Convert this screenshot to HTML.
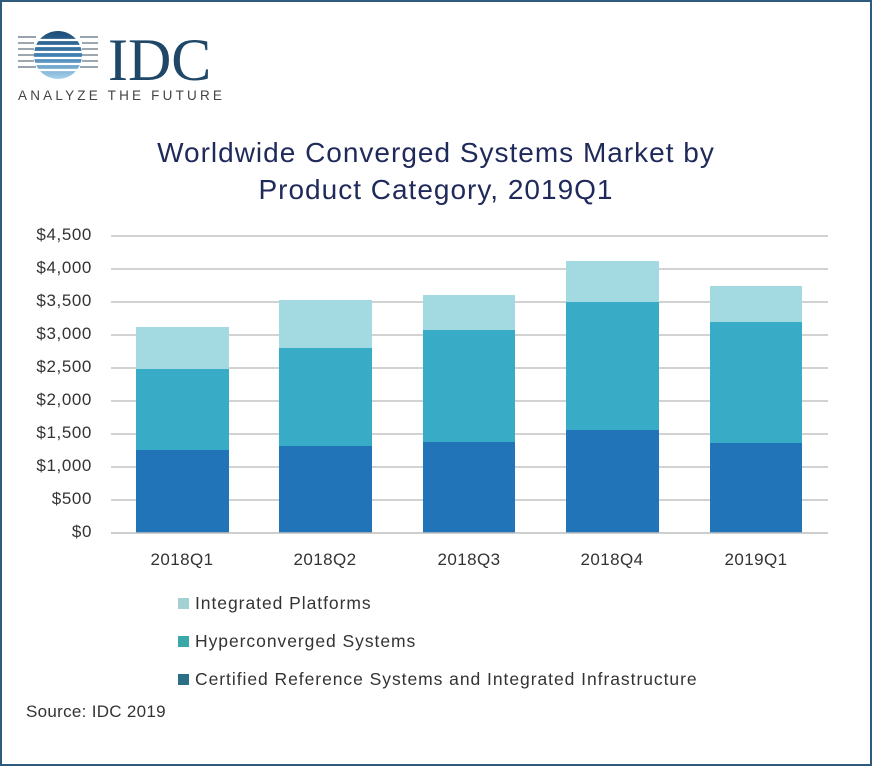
<!DOCTYPE html>
<html><head><style>
body{margin:0;width:872px;height:766px;background:#fff;font-family:"Liberation Sans",sans-serif;overflow:hidden}
.frame{position:absolute;left:0;top:0;width:868px;height:762px;border:2px solid #2e5a7c;background:#fff}
.t{position:absolute;color:#333;font-size:17px;white-space:nowrap}
.yl{position:absolute;left:6px;width:86px;text-align:right;font-size:17px;color:#333;letter-spacing:0.6px}
.xl{position:absolute;width:100px;text-align:center;top:550px;font-size:17px;color:#333;letter-spacing:0.4px}
.lg{letter-spacing:0.95px;font-size:17.5px}
</style></head><body>
<div class="frame"></div>
<svg style="position:absolute;left:0;top:0" width="872" height="766">
 <defs>
  <linearGradient id="g" x1="0" y1="0" x2="0" y2="1">
   <stop offset="0" stop-color="#1d4b76"/><stop offset="0.5" stop-color="#3f7fb0"/><stop offset="1" stop-color="#a8d3ec"/>
  </linearGradient>
 </defs>
 <circle cx="58" cy="55" r="24" fill="url(#g)"/>
 <g stroke="#fff" stroke-width="2.2">
  <line x1="30" y1="40" x2="90" y2="40"/><line x1="30" y1="46" x2="90" y2="46"/>
  <line x1="30" y1="52" x2="90" y2="52"/><line x1="30" y1="58" x2="90" y2="58"/>
  <line x1="30" y1="64" x2="90" y2="64"/><line x1="30" y1="70" x2="90" y2="70"/>
 </g>
 <g stroke="#5a6c7c" stroke-width="1.2">
  <line x1="18" y1="37" x2="36" y2="37"/><line x1="80" y1="37" x2="98" y2="37"/>
  <line x1="18" y1="43" x2="34" y2="43"/><line x1="82" y1="43" x2="98" y2="43"/>
  <line x1="18" y1="49" x2="34" y2="49"/><line x1="82" y1="49" x2="98" y2="49"/>
  <line x1="18" y1="55" x2="34" y2="55"/><line x1="82" y1="55" x2="98" y2="55"/>
  <line x1="18" y1="61" x2="34" y2="61"/><line x1="82" y1="61" x2="98" y2="61"/>
  <line x1="18" y1="67" x2="36" y2="67"/><line x1="80" y1="67" x2="98" y2="67"/>
 </g>
 <text x="108" y="80" font-family="Liberation Serif,serif" font-size="60" fill="#1f4868">IDC</text>
 <text x="18" y="100" font-family="Liberation Sans,sans-serif" font-size="13.5" letter-spacing="3.2" fill="#444">ANALYZE THE FUTURE</text>
 <g stroke="#c4c4c4" stroke-width="1.5">
  <line x1="111" y1="236" x2="828" y2="236"/><line x1="111" y1="269" x2="828" y2="269"/>
  <line x1="111" y1="302" x2="828" y2="302"/><line x1="111" y1="335" x2="828" y2="335"/>
  <line x1="111" y1="368" x2="828" y2="368"/><line x1="111" y1="401" x2="828" y2="401"/>
  <line x1="111" y1="434" x2="828" y2="434"/><line x1="111" y1="467" x2="828" y2="467"/>
  <line x1="111" y1="500" x2="828" y2="500"/>
 </g>
 <g>
  <rect x="136" y="327" width="93" height="42" fill="#a3d9e0"/><rect x="136" y="369" width="93" height="81" fill="#38acc6"/><rect x="136" y="450" width="93" height="83" fill="#2274b8"/>
  <rect x="279" y="300" width="93" height="48" fill="#a3d9e0"/><rect x="279" y="348" width="93" height="98" fill="#38acc6"/><rect x="279" y="446" width="93" height="87" fill="#2274b8"/>
  <rect x="423" y="295" width="92" height="35" fill="#a3d9e0"/><rect x="423" y="330" width="92" height="112" fill="#38acc6"/><rect x="423" y="442" width="92" height="91" fill="#2274b8"/>
  <rect x="566" y="261" width="93" height="41" fill="#a3d9e0"/><rect x="566" y="302" width="93" height="128" fill="#38acc6"/><rect x="566" y="430" width="93" height="103" fill="#2274b8"/>
  <rect x="710" y="286" width="92" height="36" fill="#a3d9e0"/><rect x="710" y="322" width="92" height="121" fill="#38acc6"/><rect x="710" y="443" width="92" height="90" fill="#2274b8"/>
 </g>
 <line x1="111" y1="533" x2="828" y2="533" stroke="#bdbdbd" stroke-width="1.5"/>
 <rect x="178" y="598" width="11" height="11" fill="#a3d0d0"/>
 <rect x="178" y="636" width="11" height="11" fill="#3aa8a8"/>
 <rect x="178" y="674" width="11" height="11" fill="#2a6f86"/>
</svg>
<div class="t" style="left:0;width:872px;text-align:center;top:134px;font-size:28px;letter-spacing:1px;color:#1f2a5a;line-height:37px">Worldwide Converged Systems Market by<br>Product Category, 2019Q1</div>
<div class="yl" style="top:225px">$4,500</div>
<div class="yl" style="top:258px">$4,000</div>
<div class="yl" style="top:291px">$3,500</div>
<div class="yl" style="top:324px">$3,000</div>
<div class="yl" style="top:357px">$2,500</div>
<div class="yl" style="top:390px">$2,000</div>
<div class="yl" style="top:423px">$1,500</div>
<div class="yl" style="top:456px">$1,000</div>
<div class="yl" style="top:489px">$500</div>
<div class="yl" style="top:522px">$0</div>
<div class="xl" style="left:132px">2018Q1</div>
<div class="xl" style="left:275px">2018Q2</div>
<div class="xl" style="left:419px">2018Q3</div>
<div class="xl" style="left:562px">2018Q4</div>
<div class="xl" style="left:706px">2019Q1</div>
<div class="t lg" style="left:195px;top:593px">Integrated Platforms</div>
<div class="t lg" style="left:195px;top:631px">Hyperconverged Systems</div>
<div class="t lg" style="left:195px;top:669px">Certified Reference Systems and Integrated Infrastructure</div>
<div class="t" style="left:26px;top:702px;letter-spacing:0.3px">Source: IDC 2019</div>
</body></html>
